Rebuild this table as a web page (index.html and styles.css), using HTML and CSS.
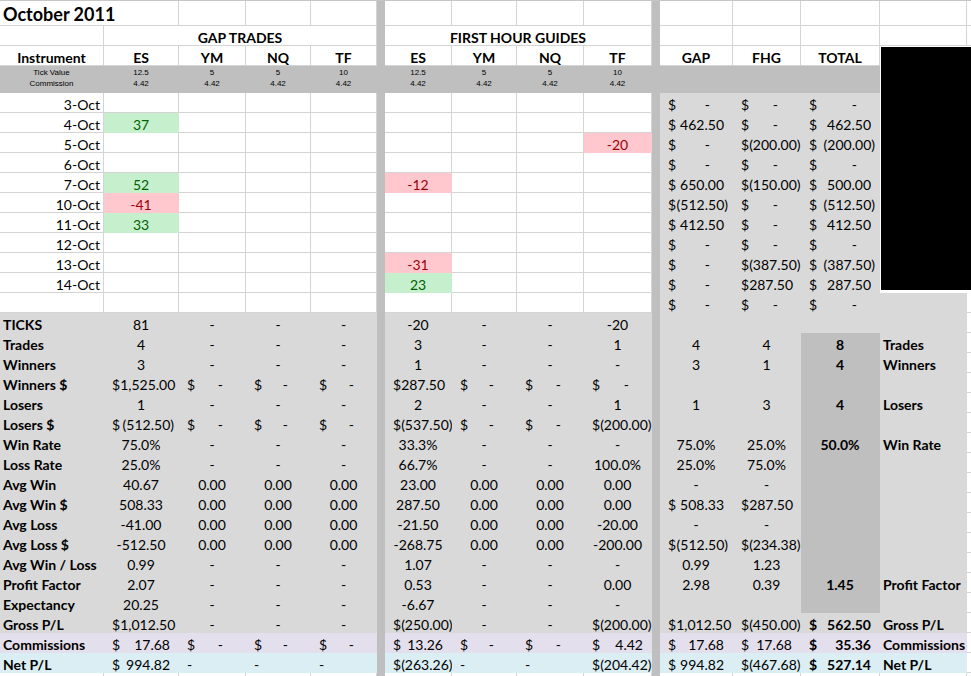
FILE: index.html
```html
<!DOCTYPE html>
<html lang="en">
<head>
<meta charset="utf-8">
<title>October 2011</title>
<link rel="stylesheet" href="styles.css">
</head>
<body>
<div class="sheet">
  <div class="sep s1"></div>
  <div class="sep s2"></div>
  <div class="redact"></div>

  <div class="row"><div class="ttl">October 2011</div><div></div><div></div><div></div><div></div><div></div><div></div><div></div><div></div><div></div><div></div><div></div><div></div></div>
  <div class="row"><div></div><div class="sp4 b">GAP TRADES</div><div class="sp4 b">FIRST HOUR GUIDES</div><div></div><div></div><div></div><div></div><div></div></div>
  <div class="row"><div class="b">Instrument</div><div class="b">ES</div><div class="b">YM</div><div class="b">NQ</div><div class="b">TF</div><div class="b">ES</div><div class="b">YM</div><div class="b">NQ</div><div class="b">TF</div><div class="b">GAP</div><div class="b">FHG</div><div class="b">TOTAL</div></div>
  <div class="row band"><div class="lbl">Tick Value<br>Commission</div><div>12.5<br>4.42</div><div>5<br>4.42</div><div>5<br>4.42</div><div>10<br>4.42</div><div>12.5<br>4.42</div><div>5<br>4.42</div><div>5<br>4.42</div><div>10<br>4.42</div><div></div><div></div><div></div></div>

  <div class="row"><div class="r">3-Oct</div><div></div><div></div><div></div><div></div><div></div><div></div><div></div><div></div><div class="g m z"><i>$</i>-</div><div class="g m z"><i>$</i>-</div><div class="g m z"><i>$</i>-</div></div>
  <div class="row"><div class="r">4-Oct</div><div class="up">37</div><div></div><div></div><div></div><div></div><div></div><div></div><div></div><div class="g m"><i>$</i>462.50</div><div class="g m z"><i>$</i>-</div><div class="g m"><i>$</i>462.50</div></div>
  <div class="row"><div class="r">5-Oct</div><div></div><div></div><div></div><div></div><div></div><div></div><div></div><div class="dn">-20</div><div class="g m z"><i>$</i>-</div><div class="g m n"><i>$</i>(200.00)</div><div class="g m n"><i>$</i>(200.00)</div></div>
  <div class="row"><div class="r">6-Oct</div><div></div><div></div><div></div><div></div><div></div><div></div><div></div><div></div><div class="g m z"><i>$</i>-</div><div class="g m z"><i>$</i>-</div><div class="g m z"><i>$</i>-</div></div>
  <div class="row"><div class="r">7-Oct</div><div class="up">52</div><div></div><div></div><div></div><div class="dn">-12</div><div></div><div></div><div></div><div class="g m"><i>$</i>650.00</div><div class="g m n"><i>$</i>(150.00)</div><div class="g m"><i>$</i>500.00</div></div>
  <div class="row"><div class="r">10-Oct</div><div class="dn">-41</div><div></div><div></div><div></div><div></div><div></div><div></div><div></div><div class="g m n"><i>$</i>(512.50)</div><div class="g m z"><i>$</i>-</div><div class="g m n"><i>$</i>(512.50)</div></div>
  <div class="row"><div class="r">11-Oct</div><div class="up">33</div><div></div><div></div><div></div><div></div><div></div><div></div><div></div><div class="g m"><i>$</i>412.50</div><div class="g m z"><i>$</i>-</div><div class="g m"><i>$</i>412.50</div></div>
  <div class="row"><div class="r">12-Oct</div><div></div><div></div><div></div><div></div><div></div><div></div><div></div><div></div><div class="g m z"><i>$</i>-</div><div class="g m z"><i>$</i>-</div><div class="g m z"><i>$</i>-</div></div>
  <div class="row"><div class="r">13-Oct</div><div></div><div></div><div></div><div></div><div class="dn">-31</div><div></div><div></div><div></div><div class="g m z"><i>$</i>-</div><div class="g m n"><i>$</i>(387.50)</div><div class="g m n"><i>$</i>(387.50)</div></div>
  <div class="row"><div class="r">14-Oct</div><div></div><div></div><div></div><div></div><div class="up">23</div><div></div><div></div><div></div><div class="g m z"><i>$</i>-</div><div class="g m"><i>$</i>287.50</div><div class="g m"><i>$</i>287.50</div></div>
  <div class="row"><div></div><div></div><div></div><div></div><div></div><div></div><div></div><div></div><div></div><div class="g m z"><i>$</i>-</div><div class="g m z"><i>$</i>-</div><div class="g m z"><i>$</i>-</div><div class="g"></div><div></div></div>

  <div class="row gs"><div class="l b">TICKS</div><div>81</div><div>-</div><div>-</div><div>-</div><div>-20</div><div>-</div><div>-</div><div>-20</div><div></div><div></div><div></div><div></div><div class="w"></div></div>
  <div class="row gs"><div class="l b">Trades</div><div>4</div><div>-</div><div>-</div><div>-</div><div>3</div><div>-</div><div>-</div><div>1</div><div>4</div><div>4</div><div class="k b">8</div><div class="l b">Trades</div><div class="w"></div></div>
  <div class="row gs"><div class="l b">Winners</div><div>3</div><div>-</div><div>-</div><div>-</div><div>1</div><div>-</div><div>-</div><div>-</div><div>3</div><div>1</div><div class="k b">4</div><div class="l b">Winners</div><div class="w"></div></div>
  <div class="row gs"><div class="l b">Winners $</div><div class="m"><i>$</i>1,525.00</div><div class="m z"><i>$</i>-</div><div class="m z"><i>$</i>-</div><div class="m z"><i>$</i>-</div><div class="m"><i>$</i>287.50</div><div class="m z"><i>$</i>-</div><div class="m z"><i>$</i>-</div><div class="m z"><i>$</i>-</div><div></div><div></div><div class="k"></div><div></div><div class="w"></div></div>
  <div class="row gs"><div class="l b">Losers</div><div>1</div><div>-</div><div>-</div><div>-</div><div>2</div><div>-</div><div>-</div><div>1</div><div>1</div><div>3</div><div class="k b">4</div><div class="l b">Losers</div><div class="w"></div></div>
  <div class="row gs"><div class="l b">Losers $</div><div class="m n"><i>$</i>(512.50)</div><div class="m z"><i>$</i>-</div><div class="m z"><i>$</i>-</div><div class="m z"><i>$</i>-</div><div class="m n"><i>$</i>(537.50)</div><div class="m z"><i>$</i>-</div><div class="m z"><i>$</i>-</div><div class="m n"><i>$</i>(200.00)</div><div></div><div></div><div class="k"></div><div></div><div class="w"></div></div>
  <div class="row gs"><div class="l b">Win Rate</div><div>75.0%</div><div>-</div><div>-</div><div>-</div><div>33.3%</div><div>-</div><div>-</div><div>-</div><div>75.0%</div><div>25.0%</div><div class="k b">50.0%</div><div class="l b">Win Rate</div><div class="w"></div></div>
  <div class="row gs"><div class="l b">Loss Rate</div><div>25.0%</div><div>-</div><div>-</div><div>-</div><div>66.7%</div><div>-</div><div>-</div><div>100.0%</div><div>25.0%</div><div>75.0%</div><div class="k"></div><div></div><div class="w"></div></div>
  <div class="row gs"><div class="l b">Avg Win</div><div>40.67</div><div>0.00</div><div>0.00</div><div>0.00</div><div>23.00</div><div>0.00</div><div>0.00</div><div>0.00</div><div>-</div><div>-</div><div class="k"></div><div></div><div class="w"></div></div>
  <div class="row gs"><div class="l b">Avg Win $</div><div>508.33</div><div>0.00</div><div>0.00</div><div>0.00</div><div>287.50</div><div>0.00</div><div>0.00</div><div>0.00</div><div class="m"><i>$</i>508.33</div><div class="m"><i>$</i>287.50</div><div class="k"></div><div></div><div class="w"></div></div>
  <div class="row gs"><div class="l b">Avg Loss</div><div>-41.00</div><div>0.00</div><div>0.00</div><div>0.00</div><div>-21.50</div><div>0.00</div><div>0.00</div><div>-20.00</div><div>-</div><div>-</div><div class="k"></div><div></div><div class="w"></div></div>
  <div class="row gs"><div class="l b">Avg Loss $</div><div>-512.50</div><div>0.00</div><div>0.00</div><div>0.00</div><div>-268.75</div><div>0.00</div><div>0.00</div><div>-200.00</div><div class="m n"><i>$</i>(512.50)</div><div class="m n"><i>$</i>(234.38)</div><div class="k"></div><div></div><div class="w"></div></div>
  <div class="row gs"><div class="l b">Avg Win / Loss</div><div>0.99</div><div>-</div><div>-</div><div>-</div><div>1.07</div><div>-</div><div>-</div><div>-</div><div>0.99</div><div>1.23</div><div class="k"></div><div></div><div class="w"></div></div>
  <div class="row gs"><div class="l b">Profit Factor</div><div>2.07</div><div>-</div><div>-</div><div>-</div><div>0.53</div><div>-</div><div>-</div><div>0.00</div><div>2.98</div><div>0.39</div><div class="k b">1.45</div><div class="l b">Profit Factor</div><div class="w"></div></div>
  <div class="row gs"><div class="l b">Expectancy</div><div>20.25</div><div>-</div><div>-</div><div>-</div><div>-6.67</div><div>-</div><div>-</div><div>-</div><div></div><div></div><div class="k"></div><div></div><div class="w"></div></div>
  <div class="row gs"><div class="l b">Gross P/L</div><div class="m"><i>$</i>1,012.50</div><div>-</div><div>-</div><div>-</div><div class="m n"><i>$</i>(250.00)</div><div>-</div><div>-</div><div class="m n"><i>$</i>(200.00)</div><div class="m"><i>$</i>1,012.50</div><div class="m n"><i>$</i>(450.00)</div><div class="m b"><i>$</i>562.50</div><div class="l b">Gross P/L</div><div class="w"></div></div>
  <div class="row lv"><div class="l b">Commissions</div><div class="m"><i>$</i>17.68</div><div class="m z"><i>$</i>-</div><div class="m z"><i>$</i>-</div><div class="m z"><i>$</i>-</div><div class="m"><i>$</i>13.26</div><div class="m z"><i>$</i>-</div><div class="m z"><i>$</i>-</div><div class="m"><i>$</i>4.42</div><div class="m"><i>$</i>17.68</div><div class="m"><i>$</i>17.68</div><div class="m b"><i>$</i>35.36</div><div class="l b">Commissions</div><div class="w"></div></div>
  <div class="row lb"><div class="l b">Net P/L</div><div class="m"><i>$</i>994.82</div><div class="d">-</div><div class="d">-</div><div class="d">-</div><div class="m n"><i>$</i>(263.26)</div><div class="d">-</div><div class="d">-</div><div class="m n"><i>$</i>(204.42)</div><div class="m"><i>$</i>994.82</div><div class="m n"><i>$</i>(467.68)</div><div class="m b"><i>$</i>527.14</div><div class="l b">Net P/L</div><div class="w"></div></div>

  <div class="row"><div></div><div></div><div></div><div></div><div></div><div></div><div></div><div></div><div></div><div></div><div></div><div></div><div></div><div></div></div>
</div>
</body>
</html>
```
FILE: styles.css
```css
html, body {
  margin: 0;
  padding: 0;
  background: #fff;
  overflow: hidden;
}

.sheet {
  display: grid;
  width: 971px;
  height: 676px;
  overflow: hidden;
  box-sizing: border-box;
  border-top: 1px solid #c6c6c6;
  grid-template-columns: 104px 75px 67px 65px 66px 8px 67px 65px 67px 68px 8px 73px 68px 79px 87px 4px;
  grid-template-rows: 25px 20px 20px 27px repeat(30, 20px);
  font-family: Lato, "Liberation Sans", sans-serif;
  font-size: 14px;
  color: #000;
}

.row { display: contents; }

.sep { grid-row: 1 / 35; background: #bfbfbf; }
.s1 { grid-column: 6; }
.s2 { grid-column: 11; }

.redact {
  grid-column: 15 / 17;
  grid-row: 3 / 15;
  background: #000;
  margin: 1px 0 3px 1px;
}

.row > div {
  box-sizing: border-box;
  border-right: 1px solid #d4d4d4;
  border-bottom: 1px solid #d4d4d4;
  display: flex;
  align-items: center;
  justify-content: center;
  white-space: nowrap;
  padding: 4px 2px 0;
  line-height: 15px;
  min-width: 0;
}

.row > :first-child { grid-column: 1; }
.row > .ttl {
  grid-column: 1 / span 2;
  justify-content: flex-start;
  padding: 2px 0 0 3px;
  font-weight: 700;
  font-size: 18px;
}
.row > .sp4 { grid-column: span 4; }

i { font-style: normal; }

/* row fills */
.band > div {
  display: block;
  text-align: center;
  background: #bfbfbf;
  border-color: #bfbfbf;
  font-family: "Liberation Sans", Arial, sans-serif;
  font-size: 8px;
  line-height: 11px;
  padding-top: 1px;
}
.gs > div { background: #d9d9d9; border-color: #d9d9d9; }
.lv > div { background: #e4dfec; border-color: #e4dfec; }
.lb > div { background: #daeef3; border-color: #daeef3; }

/* cell fills */
.row > .g { background: #d9d9d9; border-color: #d9d9d9; }
.row > .k { background: #bfbfbf; border-color: #bfbfbf; }
.row > .w { background: #fff; border-color: #d4d4d4; }
.row > .up { background: #c6efce; border-color: #c6efce; color: #006100; }
.row > .dn { background: #ffc7ce; border-color: #ffc7ce; color: #9c0006; }

/* alignment */
.row > .l { justify-content: flex-start; padding-left: 3px; }
.row > .r { justify-content: flex-end; padding-right: 3px; }
.row > .b { font-weight: 700; }
.row > .d { justify-content: flex-start; padding-left: 8px; }

/* accounting format */
.row > .m { justify-content: space-between; padding: 4px 8px 0 8px; }
.row > .m.n { padding-right: 4px; }
.row > .m.z { padding-right: 22px; }
```
